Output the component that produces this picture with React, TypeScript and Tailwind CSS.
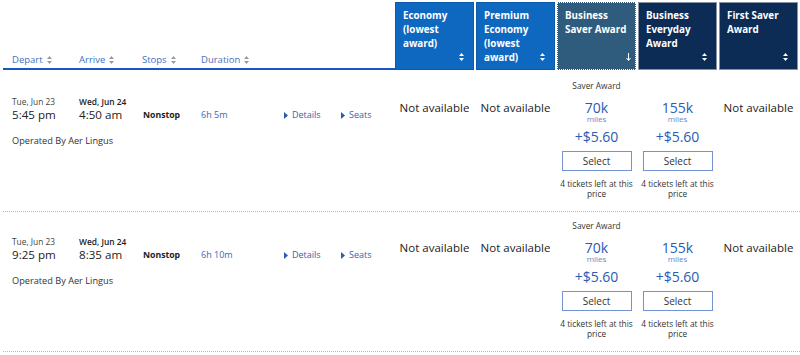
import React from 'react';

const SortIcon = ({ color = '#9a9a9a' }: { color?: string }) => (
  <svg width="5" height="8" viewBox="0 0 5 8" className="shrink-0">
    <polygon points="2.5,0 5,3 0,3" fill={color} />
    <polygon points="0,5 5,5 2.5,8" fill={color} />
  </svg>
);

const Tri = () => (
  <svg width="4" height="7" viewBox="0 0 4 7" className="mr-[4px] shrink-0">
    <polygon points="0,0 4,3.5 0,7" fill="#2a5bb5" />
  </svg>
);

const headCols = [
  { lines: ['Economy', '(lowest', 'award)'], cls: 'bg-[#0f68c0] border-[#0b5aab]', icon: 'sort' },
  { lines: ['Premium', 'Economy', '(lowest', 'award)'], cls: 'bg-[#0f68c0] border-[#0b5aab]', icon: 'sort' },
  { lines: ['Business', 'Saver Award'], cls: 'bg-[#2f5b7c] border-white border-dotted', icon: 'down' },
  { lines: ['Business', 'Everyday', 'Award'], cls: 'bg-[#0c2b55] border-[#8793a5]', icon: 'sort' },
  { lines: ['First Saver', 'Award'], cls: 'bg-[#0c2b55] border-[#8793a5]', icon: 'sort' },
];

const flights = [
  { dep: '5:45 pm', arr: '4:50 am', dur: '6h 5m' },
  { dep: '9:25 pm', arr: '8:35 am', dur: '6h 10m' },
];

const NotAvailable = () => (
  <div className="w-[79px] shrink-0 pt-[28px] text-center text-[11.5px] leading-[16px] text-[#222] whitespace-nowrap">
    Not available
  </div>
);

const Award = ({ miles, label }: { miles: string; label?: string }) => (
  <div className="w-[79px] shrink-0 flex flex-col items-center pt-[8px] text-center">
    <div className="h-[12px] text-[8.3px] leading-[12px] text-[#333] whitespace-nowrap">{label ?? ''}</div>
    <div className="mt-[9px] text-[14px] leading-[14px] text-[#2a5bb5]">{miles}</div>
    <div className="text-[8px] leading-[8px] text-[#6d86c6]">miles</div>
    <div className="mt-[6px] text-[14px] leading-[16px] text-[#2a5bb5]">+$5.60</div>
    <button className="mt-[6px] w-[70px] h-[20px] border border-[#7393d3] bg-white text-[10px] leading-[18px] text-[#333]">
      Select
    </button>
    <div className="mt-[8px] text-[8.3px] leading-[10px] text-[#333] whitespace-nowrap">
      4 tickets left at this
      <br />
      price
    </div>
  </div>
);

const App = () => {
  return (
    <div className="w-[800px] h-[355px] bg-white pl-[3px] overflow-hidden font-['Open_Sans',sans-serif]">
      <div className="flex h-[70px] pt-[2px]">
        <div className="w-[392px] shrink-0 border-b-2 border-[#1a55c8] flex items-end pb-[2px] pl-[9px] text-[9.5px] leading-[12px] text-[#4670c0]">
          {[
            ['Depart', 'w-[67px]'],
            ['Arrive', 'w-[63px]'],
            ['Stops', 'w-[59px]'],
            ['Duration', 'w-[80px]'],
          ].map(([t, w]) => (
            <div key={t} className={`${w} flex items-center gap-[4px]`}>
              <span>{t}</span>
              <SortIcon />
            </div>
          ))}
        </div>
        {headCols.map((c, i) => (
          <div
            key={i}
            className={`w-[79px] shrink-0 h-[68px] border flex justify-between pl-[7px] pr-[9px] pt-[6px] pb-[5px] ${c.cls} ${i > 0 ? 'ml-[2px]' : ''}`}
          >
            <div className="text-white font-bold text-[9.8px] leading-[14px] whitespace-nowrap">
              {c.lines.map((l) => (
                <div key={l}>{l}</div>
              ))}
            </div>
            <div className="self-end mb-[3px]">
              {c.icon === 'sort' ? (
                <SortIcon color="#ffffff" />
              ) : (
                <svg width="5" height="8" viewBox="0 0 5 8">
                  <path d="M2.5 0 V7 M0.5 5 L2.5 7.5 L4.5 5" stroke="#ffffff" strokeWidth="1" fill="none" />
                </svg>
              )}
            </div>
          </div>
        ))}
      </div>

      <div className="mt-[2px]">
        {flights.map((f, i) => (
          <div key={i} className="flex h-[140px] border-b border-dotted border-[#b8b8b8]">
            <div className="w-[392px] shrink-0 pl-[9px] pt-[24px]">
              <div className="flex items-end text-[#222]">
                <div className="w-[67px]">
                  <div className="text-[8.4px] leading-[11px] text-[#444]">Tue, Jun 23</div>
                  <div className="text-[11.6px] leading-[16px]">{f.dep}</div>
                </div>
                <div className="w-[64px]">
                  <div className="text-[8.4px] leading-[11px] font-semibold">Wed, Jun 24</div>
                  <div className="text-[11.6px] leading-[16px]">{f.arr}</div>
                </div>
                <div className="w-[58px] text-[8.7px] leading-[16px] font-bold">Nonstop</div>
                <div className="w-[83px] text-[9px] leading-[16px] text-[#3a66b8]">{f.dur}</div>
                <div className="w-[57px] flex items-center text-[9px] leading-[16px] text-[#2f62b8]">
                  <Tri />
                  Details
                </div>
                <div className="flex items-center text-[9px] leading-[16px] text-[#2f62b8]">
                  <Tri />
                  Seats
                </div>
              </div>
              <div className="mt-[12px] text-[9.2px] leading-[12px] text-[#333]">Operated By Aer Lingus</div>
            </div>
            <NotAvailable />
            <div className="ml-[2px]">
              <NotAvailable />
            </div>
            <div className="ml-[2px]">
              <Award miles="70k" label="Saver Award" />
            </div>
            <div className="ml-[2px]">
              <Award miles="155k" />
            </div>
            <div className="ml-[2px]">
              <NotAvailable />
            </div>
          </div>
        ))}
      </div>
    </div>
  );
};

export default App;
